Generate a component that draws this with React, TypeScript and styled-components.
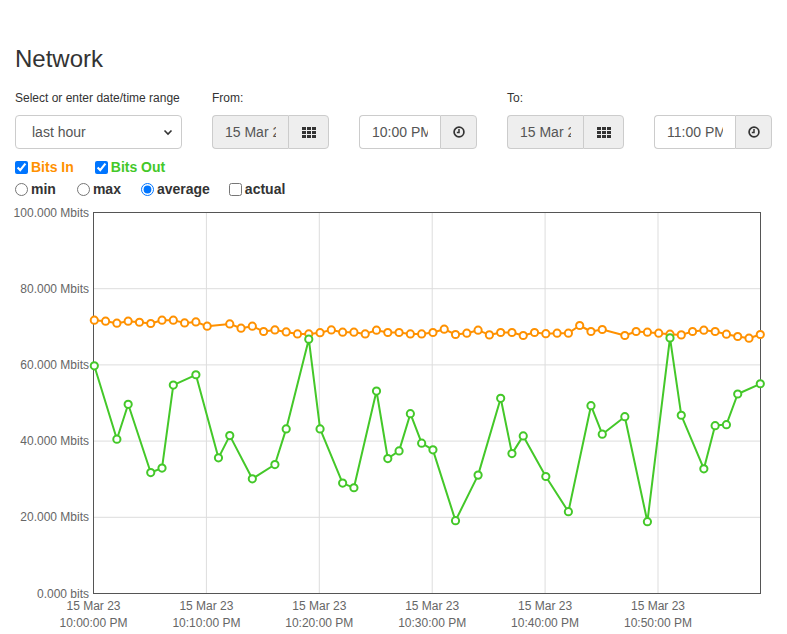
import { createGlobalStyle } from "styled-components";
import styled from "styled-components";

const GlobalStyle = createGlobalStyle`
  html, body {
    margin: 0;
    padding: 0;
    background: #fff;
  }
  body {
    font-family: "Liberation Sans", Arial, sans-serif;
    font-size: 14px;
    color: #333;
  }
`;

const ORANGE = "#ff9100";
const GREEN = "#44c829";

const Page = styled.div`
  width: 787px;
  height: 634px;
  overflow: hidden;
  padding: 0 15px;
  box-sizing: border-box;
`;

const Title = styled.h1`
  margin: 0;
  padding-top: 46px;
  font-size: 24px;
  line-height: 26px;
  font-weight: 400;
  color: #333;
`;

const Toolbar = styled.div`
  display: flex;
  margin-top: 18px;
`;

const Field = styled.div<{ $width: number }>`
  width: ${(p) => p.$width}px;
  flex: none;
  display: flex;
  flex-direction: column;
`;

const Label = styled.label`
  font-size: 12px;
  line-height: 17px;
  height: 17px;
  margin-bottom: 8px;
  color: #333;
`;

const Controls = styled.div`
  display: flex;
  gap: 30px;
`;

const Select = styled.div`
  width: 167px;
  height: 34px;
  box-sizing: border-box;
  border: 1px solid #ccc;
  border-radius: 4px;
  display: flex;
  align-items: center;
  justify-content: space-between;
  padding: 0 8px 0 16px;
  font-size: 14px;
  color: #555;
`;

const InputGroup = styled.div`
  display: flex;
  height: 34px;
`;

const Input = styled.input<{ $width: number; $readonly?: boolean }>`
  width: ${(p) => p.$width}px;
  height: 34px;
  box-sizing: border-box;
  border: 1px solid #ccc;
  border-right: none;
  border-radius: 4px 0 0 4px;
  padding: 0 12px;
  font-family: "Liberation Sans", Arial, sans-serif;
  font-size: 14px;
  color: #555;
  background: ${(p) => (p.$readonly ? "#eee" : "#fff")};
  outline: none;
`;

const AddonButton = styled.button<{ $width: number }>`
  width: ${(p) => p.$width}px;
  height: 34px;
  box-sizing: border-box;
  border: 1px solid #ccc;
  border-radius: 0 4px 4px 0;
  background: #eee;
  display: flex;
  align-items: center;
  justify-content: center;
  padding: 0;
  color: #333;
`;

const OptionRow = styled.div<{ $top: number }>`
  display: flex;
  align-items: center;
  margin-top: ${(p) => p.$top}px;
  height: 18px;
`;

const Option = styled.label<{ $color?: string; $gap: number }>`
  display: flex;
  align-items: center;
  margin-right: ${(p) => p.$gap}px;
  font-size: 14px;
  font-weight: 700;
  color: ${(p) => p.$color ?? "#333"};

  input {
    margin: 0 3px 0 0;
    width: 13px;
    height: 13px;
  }
`;

const ChartBox = styled.svg`
  display: block;
  margin-left: -15px;
  margin-top: 3px;
`;

const Chevron = () => (
  <svg width="10" height="10" viewBox="0 0 10 10">
    <path d="M1.5 3.5 L5 7 L8.5 3.5" fill="none" stroke="#333" strokeWidth="1.6" />
  </svg>
);

const GridIcon = () => (
  <svg width="14" height="11" viewBox="0 0 14 11">
    {[0, 1, 2].map((r) =>
      [0, 1, 2].map((c) => (
        <rect key={`${r}-${c}`} x={c * 5} y={r * 4} width="4" height="3" fill="#333" />
      ))
    )}
  </svg>
);

const ClockIcon = () => (
  <svg width="12" height="12" viewBox="0 0 12 12">
    <circle cx="6" cy="6" r="4.9" fill="none" stroke="#333" strokeWidth="1.7" />
    <path d="M6 3 V6.4 H3.8" fill="none" stroke="#333" strokeWidth="1.5" />
  </svg>
);

// Mbits per minute, null where no sample
const bitsIn: (number | null)[] = [
  71.73, 71.47, 70.94, 71.47, 71.2, 70.86, 71.73, 71.73, 71.02, 71.28, 70.16, null,
  70.76, 69.63, 70.16, 68.77, 69.19, 68.66, 68.14, 68.14, 68.46, 69.19, 68.59, 68.59,
  68.14, 69.11, 68.51, 68.51, 68.14, 68.14, 68.51, 69.37, 67.98, 68.32, 69.11, 67.88,
  68.51, 68.51, 67.72, 68.51, 68.19, 68.32, 68.32, 70.34, 68.77, 69.29, null, 67.72,
  68.77, 68.59, 68.32, 68.06, 67.88, 68.77, 69.11, 68.77, 68.06, 67.46, 67.02, 67.98,
];

const bitsOut: [number, number][] = [
  [0, 59.76], [2, 40.5], [3, 49.66], [5, 31.75], [6, 32.91], [7, 54.71], [9, 57.41],
  [11, 35.6], [12, 41.44], [14, 30.1], [16, 33.85], [17, 43.19], [19, 66.75], [20, 43.19],
  [22, 28.98], [23, 27.75], [25, 53.14], [26, 35.42], [27, 37.43], [28, 47.2], [29, 39.45],
  [30, 37.7], [32, 19.11], [34, 31.07], [36, 51.23], [37, 36.73], [38, 41.36], [40, 30.71],
  [42, 21.47], [44, 49.29], [45, 41.81], [47, 46.41], [49, 18.85], [51, 67.09], [52, 46.78],
  [54, 32.72], [55, 44.06], [56, 44.32], [57, 52.36], [59, 55.05],
];

const LEFT = 93.5;
const RIGHT = 760.5;
const TOP = 213.5;
const BOTTOM = 594.5;
const xOf = (m: number) => 94.3 + m * 11.288;
const yOf = (v: number) => BOTTOM - (v / 100) * (BOTTOM - TOP);

const yTicks = ["0.000 bits", "20.000 Mbits", "40.000 Mbits", "60.000 Mbits", "80.000 Mbits", "100.000 Mbits"];
const xTicks = ["10:00:00 PM", "10:10:00 PM", "10:20:00 PM", "10:30:00 PM", "10:40:00 PM", "10:50:00 PM"];

function Series({ points, color }: { points: [number, number][]; color: string }) {
  const d = points.map(([m, v], i) => `${i ? "L" : "M"}${xOf(m).toFixed(1)} ${yOf(v).toFixed(1)}`).join(" ");
  return (
    <g>
      <path d={d} fill="none" stroke={color} strokeWidth="2" strokeLinejoin="round" />
      {points.map(([m, v]) => (
        <circle key={m} cx={xOf(m)} cy={yOf(v)} r="3.6" fill="#fff" stroke={color} strokeWidth="2" />
      ))}
    </g>
  );
}

function Chart() {
  const inPoints = bitsIn
    .map((v, m) => (v === null ? null : ([m, v] as [number, number])))
    .filter((p): p is [number, number] => p !== null);
  return (
    <ChartBox width="787" height="432" viewBox="0 202 787 432">
      {yTicks.map((t, i) => {
        const y = BOTTOM - i * ((BOTTOM - TOP) / 5);
        return (
          <g key={t}>
            {i > 0 && i < 5 && <line x1={LEFT} x2={RIGHT} y1={y} y2={y} stroke="#ddd" strokeWidth="1" />}
            <text x="89" y={y + 4} textAnchor="end" fontSize="12" fill="#666" fontFamily="Liberation Sans, Arial, sans-serif">
              {t}
            </text>
          </g>
        );
      })}
      {xTicks.map((t, i) => {
        const x = LEFT + i * 112.9;
        return (
          <g key={t}>
            {i > 0 && <line x1={x} x2={x} y1={TOP} y2={BOTTOM} stroke="#ddd" strokeWidth="1" />}
            <text x={x} y="611" textAnchor="middle" fontSize="12" fill="#666" fontFamily="Liberation Sans, Arial, sans-serif">
              15 Mar 23
            </text>
            <text x={x} y="628" textAnchor="middle" fontSize="12" fill="#666" fontFamily="Liberation Sans, Arial, sans-serif">
              {t}
            </text>
          </g>
        );
      })}
      <rect x={LEFT} y={TOP} width={RIGHT - LEFT} height={BOTTOM - TOP} fill="none" stroke="#555" strokeWidth="1" />
      <Series points={inPoints} color={ORANGE} />
      <Series points={bitsOut} color={GREEN} />
    </ChartBox>
  );
}

function TimeRange({ date, time }: { date: string; time: string }) {
  return (
    <Controls>
      <InputGroup>
        <Input $width={76} $readonly readOnly value={date} />
        <AddonButton $width={41}>
          <GridIcon />
        </AddonButton>
      </InputGroup>
      <InputGroup>
        <Input $width={81} readOnly value={time} />
        <AddonButton $width={37}>
          <ClockIcon />
        </AddonButton>
      </InputGroup>
    </Controls>
  );
}

export default function App() {
  return (
    <Page>
      <GlobalStyle />
      <Title>Network</Title>
      <Toolbar>
        <Field $width={197}>
          <Label>Select or enter date/time range</Label>
          <Select>
            <span>last hour</span>
            <Chevron />
          </Select>
        </Field>
        <Field $width={295}>
          <Label>From:</Label>
          <TimeRange date="15 Mar 2023" time="10:00 PM" />
        </Field>
        <Field $width={265}>
          <Label>To:</Label>
          <TimeRange date="15 Mar 2023" time="11:00 PM" />
        </Field>
      </Toolbar>
      <OptionRow $top={9}>
        <Option $color={ORANGE} $gap={21}>
          <input type="checkbox" defaultChecked />
          Bits In
        </Option>
        <Option $color={GREEN} $gap={0}>
          <input type="checkbox" defaultChecked />
          Bits Out
        </Option>
      </OptionRow>
      <OptionRow $top={4}>
        <Option $gap={21}>
          <input type="radio" name="agg" />
          min
        </Option>
        <Option $gap={20}>
          <input type="radio" name="agg" />
          max
        </Option>
        <Option $gap={19}>
          <input type="radio" name="agg" defaultChecked />
          average
        </Option>
        <Option $gap={0}>
          <input type="checkbox" />
          actual
        </Option>
      </OptionRow>
      <Chart />
    </Page>
  );
}
